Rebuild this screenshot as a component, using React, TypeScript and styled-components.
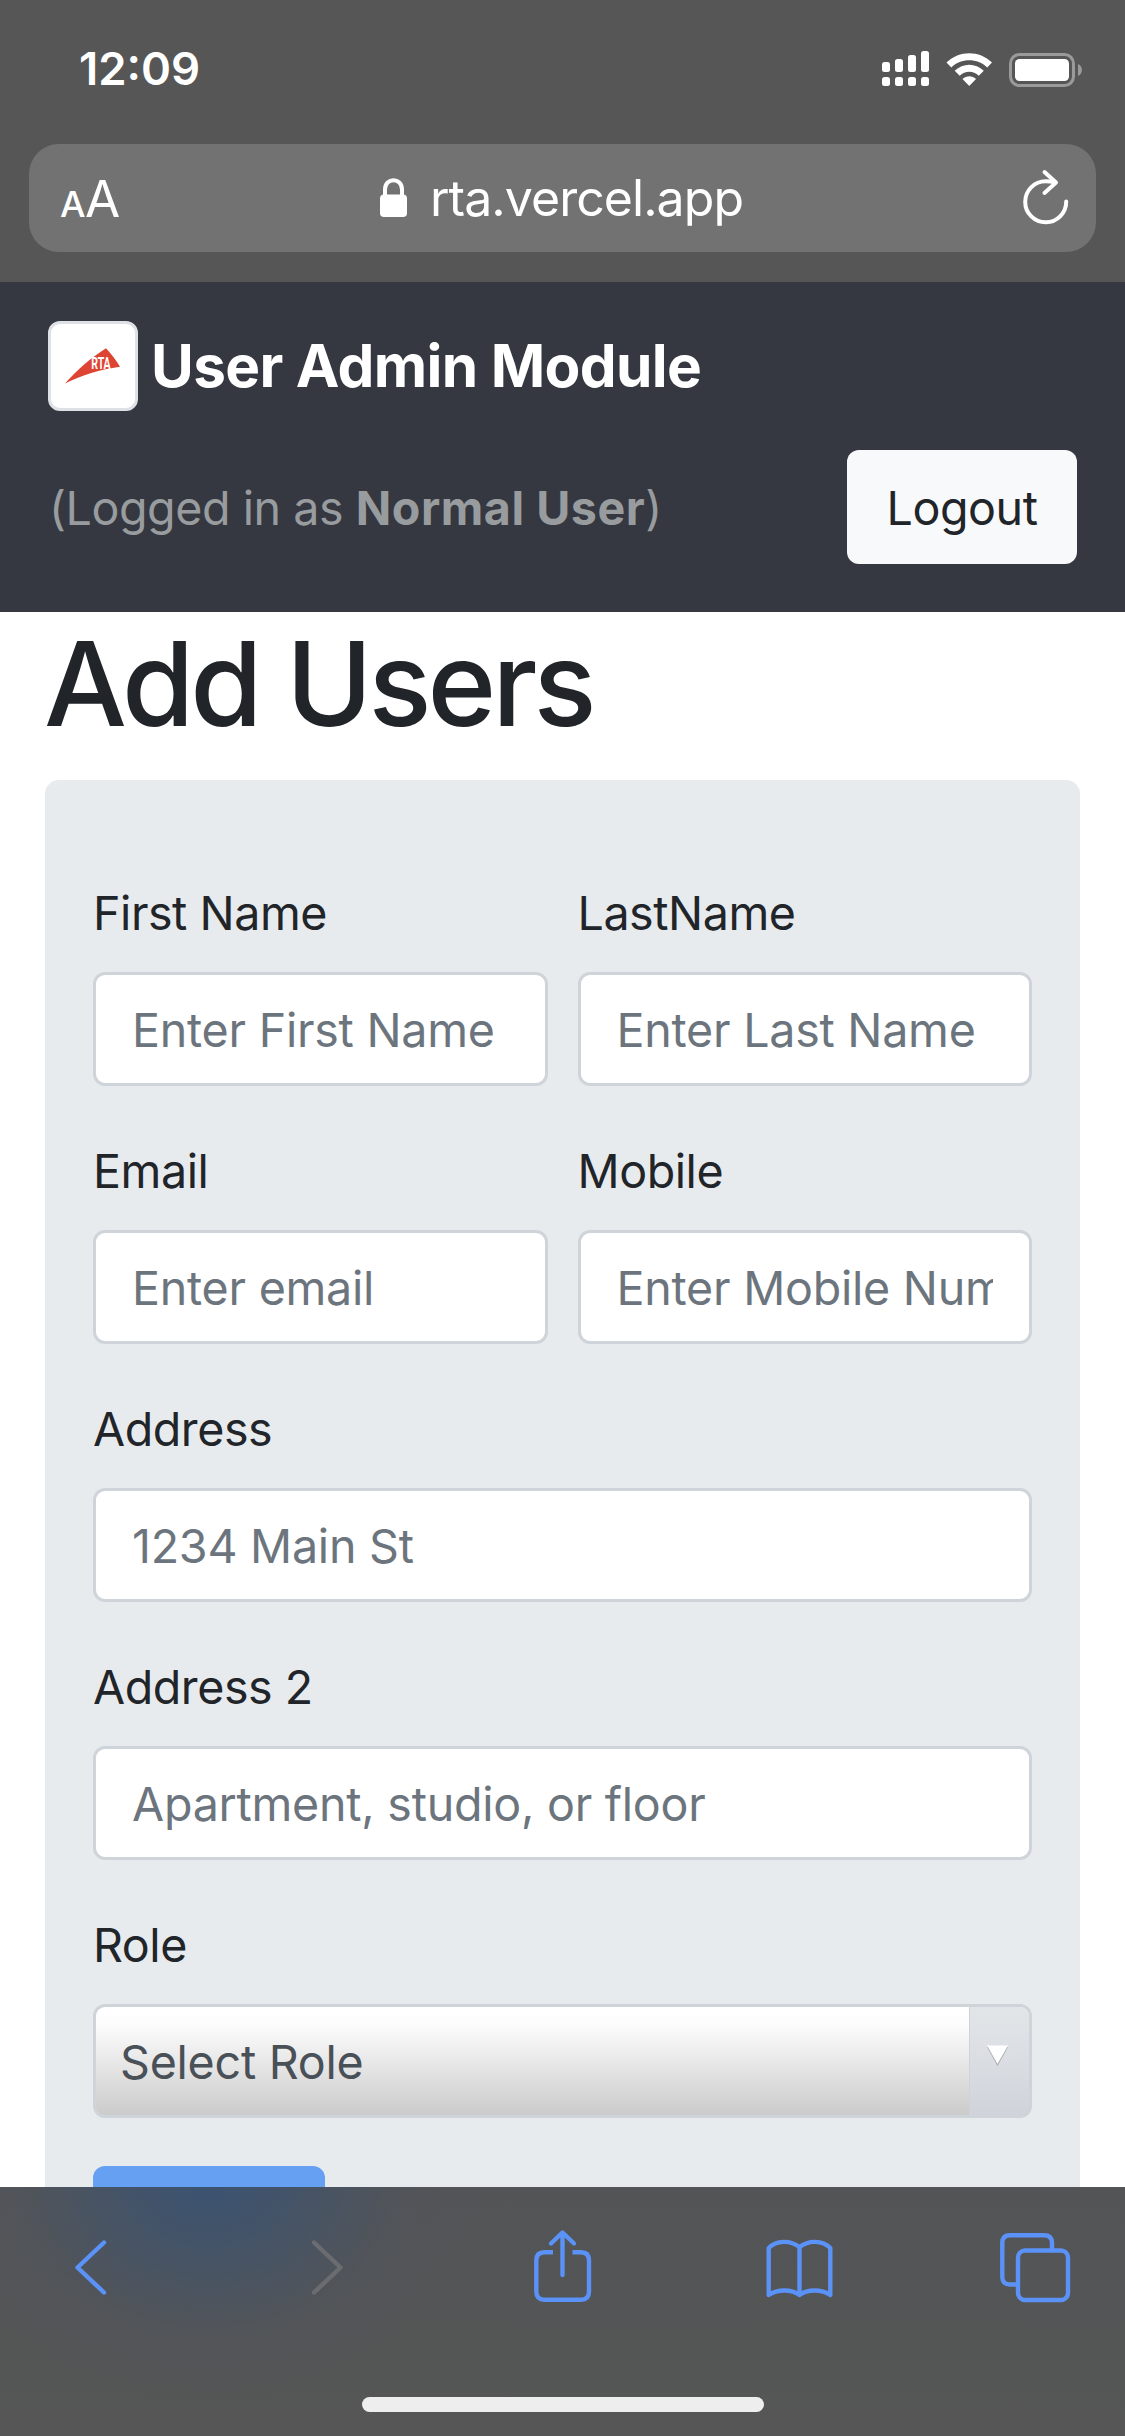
import React from "react";
import styled, { createGlobalStyle } from "styled-components";

const GlobalStyle = createGlobalStyle`
  *, *::before, *::after { box-sizing: border-box; }
  body {
    margin: 0;
    background: #fff;
    color: #212529;
    font-family: Inter, "Liberation Sans", sans-serif;
    font-size: 46.6px;
    line-height: 74px;
  }
`;

const blue = "#5b92f7";

const Screen = styled.div`
  width: 1125px;
  height: 2436px;
  display: flex;
  flex-direction: column;
  overflow: hidden;
`;

const TopChrome = styled.div`
  flex: none;
  height: 282px;
  background: #565656;
  color: #fff;
  display: flex;
  flex-direction: column;
`;

const StatusBar = styled.div`
  height: 144px;
  padding: 0 43px 6px 79px;
  display: flex;
  align-items: center;
  justify-content: space-between;
`;

const Clock = styled.span`
  font-size: 45.5px;
  font-weight: 600;
`;

const AddressBar = styled.div`
  height: 108px;
  margin: 0 29px;
  padding: 0 27px 0 31px;
  border-radius: 30px;
  background: #727272;
  display: flex;
  align-items: center;
  justify-content: space-between;
`;

const TextSize = styled.div`
  display: flex;
  align-items: baseline;
  width: 85px;
  padding-top: 6px;
  line-height: 60px;
`;

const Letter = styled.span<{ $size: number; $weight: number }>`
  font-size: ${(p) => p.$size}px;
  font-weight: ${(p) => p.$weight};
  letter-spacing: -0.5px;
`;

const Address = styled.div`
  display: flex;
  align-items: center;
  gap: 23px;
  font-size: 50px;
`;

const Url = styled.span`
  letter-spacing: -0.95px;
`;

const ReloadSlot = styled.div`
  width: 91px;
  display: flex;
  justify-content: flex-end;
`;

const Navbar = styled.header`
  flex: none;
  height: 330px;
  background: #353840;
  padding: 39px 48px 48px;
  display: flex;
  flex-direction: column;
  justify-content: space-between;
`;

const Brand = styled.div`
  display: flex;
  align-items: center;
  gap: 13px;
`;

const Logo = styled.div`
  width: 90px;
  height: 90px;
  border: 3px solid #dee2e6;
  border-radius: 12px;
  background: #fff;
`;

const BrandName = styled.span`
  color: #fff;
  font-size: 58.5px;
  font-weight: 700;
  letter-spacing: -0.65px;
`;

const Session = styled.div`
  display: flex;
  align-items: center;
  justify-content: space-between;
`;

const SessionText = styled.span`
  color: #999c9f;
  padding: 2px 0 0 1px;
  letter-spacing: -0.45px;
  b {
    font-weight: 700;
    letter-spacing: 0.55px;
  }
`;

const Button = styled.button<{ $primary?: boolean }>`
  width: ${(p) => (p.$primary ? 232 : 230)}px;
  height: 114px;
  flex: none;
  border: 0;
  padding: 2px 0 0;
  border-radius: 12px;
  font: inherit;
  letter-spacing: -0.45px;
  background: ${(p) => (p.$primary ? "#66a0f3" : "#f8f9fa")};
  color: ${(p) => (p.$primary ? "#fff" : "#212529")};
`;

const Content = styled.main`
  height: 1575px;
  flex: none;
  overflow: hidden;
  padding: 0 45px;
`;

const Heading = styled.h1`
  margin: 0 0 24px -1px;
  height: 144px;
  line-height: 144px;
  font-size: 117px;
  font-weight: 500;
  letter-spacing: -4px;
`;

const Card = styled.section`
  background: #e8ebee;
  border-radius: 14px;
  padding: 96px 48px;
  display: flex;
  flex-direction: column;
  gap: 48px;
`;

const Row = styled.div`
  display: grid;
  grid-template-columns: 1fr 1fr;
  gap: 30px;
`;

const Field = styled.label`
  display: flex;
  flex-direction: column;
  gap: 22px;
  min-width: 0;
  letter-spacing: -0.45px;
`;

const Input = styled.input`
  width: 100%;
  height: 114px;
  border: 3px solid #ced4da;
  border-radius: 12px;
  padding: 2px 36px 0;
  background: #fff;
  font: inherit;
  letter-spacing: -0.25px;
  &::placeholder { color: #6c757d; opacity: 1; }
`;

const Select = styled.div`
  height: 114px;
  border: 3px solid #ced4da;
  border-radius: 12px;
  overflow: hidden;
  display: flex;
  color: #495057;
  letter-spacing: -0.25px;
  background: linear-gradient(#fff 0%, #fdfdfd 15%, #cbcbcb 100%);
`;

const SelectValue = styled.span`
  flex: 1;
  padding-left: 24px;
  line-height: 110px;
`;

const SelectArrow = styled.span`
  width: 60px;
  border-left: 1px solid #cfd2d6;
  background: linear-gradient(#e2e5e8, #dadde2 50%, #d0d3d9);
  display: flex;
  justify-content: center;
  padding: 37px 4px 0 0;
`;

const Toolbar = styled.footer`
  flex: 1;
  background:
    radial-gradient(ellipse 275px 225px at 208px -10px, rgba(52, 82, 120, 0.82), rgba(60, 83, 112, 0.6) 35%, rgba(76, 84, 98, 0.3) 68%, rgba(84, 85, 87, 0) 100%),
    linear-gradient(#535456, #555655);
  display: flex;
  flex-direction: column;
  align-items: center;
`;

const Tools = styled.div`
  width: 100%;
  height: 210px;
  padding: 40px 51px 0 52px;
  display: flex;
  justify-content: space-between;
`;

const HomeIndicator = styled.div`
  width: 402px;
  height: 15px;
  border-radius: 8px;
  background: #eee;
`;

function StatusIcons() {
  return (
    <svg width="202" height="40" viewBox="880 48 202 40" fill="#fff">
      {[61, 58, 54, 50].map((top, i) => (
        <g key={top}>
          <rect x={882 + i * 13} y={top} width="8" height={71 - top} rx="2.5" />
          <rect x={882 + i * 13} y="76" width="8" height="9" rx="2.5" />
        </g>
      ))}
      <path d="M946.5 61.5C959 49 979.5 49 992 61.5L987.2 66.4C977.5 56.9 961 56.9 951.3 66.4Z" />
      <path d="M954.7 69.8C963 61.7 975.5 61.7 983.8 69.8L978.8 74.7C973.3 69.5 965.2 69.5 959.7 74.7Z" />
      <path d="M962.5 78C966.5 74.2 972 74.2 976 78L969.25 85Z" />
      <rect x="1010.5" y="53.5" width="63" height="31" rx="9" fill="none" stroke="#9a9a9a" strokeWidth="3" />
      <rect x="1015" y="58" width="54" height="22" rx="4.5" />
      <path d="M1078 63C1083.3 65 1083.3 73 1078 75Z" fill="#9a9a9a" />
    </svg>
  );
}

function LockIcon() {
  return (
    <svg width="27" height="40" viewBox="0 0 27 40">
      <rect x="0" y="16.5" width="27" height="22.5" rx="4" fill="#fff" />
      <path d="M5 18V11.5C5 -1 22 -1 22 11.5V18" fill="none" stroke="#fff" strokeWidth="4" />
    </svg>
  );
}

function ReloadIcon() {
  return (
    <svg width="50" height="58" viewBox="1019 170 50 58" fill="none" stroke="#fff" strokeWidth="4" strokeLinecap="round" strokeLinejoin="round">
      <path d="M1055 183.5C1052 182.7 1049 182.3 1045.7 182.3A20.5 20.5 0 1 0 1066.2 202.5" />
      <path d="M1044.5 173L1056 183.5L1044.5 194" />
    </svg>
  );
}

function RtaMark() {
  return (
    <svg width="84" height="84" viewBox="51 324 84 84">
      <path d="M65 383.5C78 369 91 358 106 348.3C111 353.5 116 360 120 366.7C100 369.5 82 375 65 383.5Z" fill="#de4433" />
      <text x="91.2" y="369" fontFamily="Roboto, sans-serif" fontSize="16" fontWeight="700" fill="#fff" textLength="19.5" lengthAdjust="spacingAndGlyphs">RTA</text>
    </svg>
  );
}

const ToolIcon = styled.svg`
  width: 80px;
  height: 80px;
  fill: none;
  stroke: ${blue};
  stroke-width: 4.4;
  stroke-linecap: round;
  stroke-linejoin: round;
`;

const ForwardIcon = styled(ToolIcon)`
  stroke: #6b6c70;
`;

export default function App() {
  return (
    <Screen>
      <GlobalStyle />
      <TopChrome>
        <StatusBar>
          <Clock>12:09</Clock>
          <StatusIcons />
        </StatusBar>
        <AddressBar>
          <TextSize>
            <Letter $size={36} $weight={500}>A</Letter>
            <Letter $size={51} $weight={400}>A</Letter>
          </TextSize>
          <Address>
            <LockIcon />
            <Url>rta.vercel.app</Url>
          </Address>
          <ReloadSlot>
            <ReloadIcon />
          </ReloadSlot>
        </AddressBar>
      </TopChrome>

      <Navbar>
        <Brand>
          <Logo>
            <RtaMark />
          </Logo>
          <BrandName>User Admin Module</BrandName>
        </Brand>
        <Session>
          <SessionText>
            (Logged in as <b>Normal User</b>)
          </SessionText>
          <Button>Logout</Button>
        </Session>
      </Navbar>

      <Content>
        <Heading>Add Users</Heading>
        <Card>
          <Row>
            <Field>
              First Name
              <Input placeholder="Enter First Name" />
            </Field>
            <Field>
              LastName
              <Input placeholder="Enter Last Name" />
            </Field>
          </Row>
          <Row>
            <Field>
              Email
              <Input placeholder="Enter email" />
            </Field>
            <Field>
              Mobile
              <Input placeholder="Enter Mobile Number" />
            </Field>
          </Row>
          <Field>
            Address
            <Input placeholder="1234 Main St" />
          </Field>
          <Field>
            Address 2
            <Input placeholder="Apartment, studio, or floor" />
          </Field>
          <Field>
            Role
            <Select>
              <SelectValue>Select Role</SelectValue>
              <SelectArrow>
                <svg width="23" height="24" viewBox="0 0 23 24">
                  <path d="M1 3L11.5 22L22 3Z" fill="#a9abae" />
                  <path d="M1 1.5H22L11.5 20Z" fill="#fff" />
                </svg>
              </SelectArrow>
            </Select>
          </Field>
          <Button $primary aria-label="Submit" />
        </Card>
      </Content>

      <Toolbar>
        <Tools>
          <ToolIcon viewBox="52 2227 80 80">
            <path d="M104 2242.5L77.5 2267.5L104 2292.5" />
          </ToolIcon>
          <ForwardIcon viewBox="287.5 2227 80 80">
            <path d="M313.5 2242.5L340 2267.5L313.5 2292.5" />
          </ForwardIcon>
          <ToolIcon viewBox="523 2227 80 80">
            <path d="M553 2252.3H544.5Q536.3 2252.3 536.3 2260.5V2291.5Q536.3 2299.7 544.5 2299.7H581Q589 2299.7 589 2291.5V2260.5Q589 2252.3 581 2252.3H572.5" strokeLinecap="butt" />
            <path d="M562.5 2275V2233M551 2243.5L562.5 2232.5L574 2243.5" />
          </ToolIcon>
          <ToolIcon viewBox="758.5 2227 80 80">
            <path d="M799 2247V2295M799 2247C790 2240 776 2240 768.2 2248V2295C777 2289 791 2289 799 2295C807 2289 821 2289 829.8 2295V2248C822 2240 808 2240 799 2247" />
          </ToolIcon>
          <ToolIcon viewBox="994 2227 80 80">
            <rect x="1018" y="2250.5" width="50" height="49.5" rx="7" />
            <path d="M1018 2284.5H1010Q1002.3 2284.5 1002.3 2277V2243Q1002.3 2235.3 1010 2235.3H1044Q1052 2235.3 1052 2243V2250" strokeLinecap="butt" />
          </ToolIcon>
        </Tools>
        <HomeIndicator />
      </Toolbar>
    </Screen>
  );
}
